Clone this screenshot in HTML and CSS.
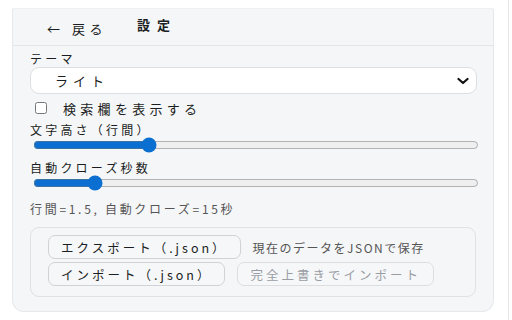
FILE: index.html
```html
<!DOCTYPE html>
<html lang="ja">
<head>
    <meta charset="UTF-8">
    <title>設定</title>
    <link rel="stylesheet" href="styles.css">
</head>
<body>
    <div class="page">
        <div class="panel">
            <div class="header">
                <button class="back">← 戻る</button>
                <h1>設定</h1>
            </div>

            <div class="content">
                <label class="label">テーマ</label>
                <div class="select-wrap">
                    <select class="select">
                        <option>ライト</option>
                        <option>ダーク</option>
                    </select>
                    <svg class="chevron" width="12" height="8" viewBox="0 0 12 8">
                        <path d="M1.5 2 L6 6 L10.5 2" fill="none" stroke="#111" stroke-width="2.2" stroke-linecap="round" stroke-linejoin="round"/>
                    </svg>
                </div>

                <label class="check">
                    <input type="checkbox">
                    <span>検索欄を表示する</span>
                </label>

                <label class="label">文字高さ（行間）</label>
                <input type="range" class="range" min="1" max="3" step="0.1" value="1.5">

                <label class="label">自動クローズ秒数</label>
                <input type="range" class="range" min="0" max="120" value="15">

                <p class="info">行間=1.5, 自動クローズ=15秒</p>

                <div class="io-box">
                    <div class="io-row">
                        <button class="btn">エクスポート（.json）</button>
                        <span class="hint">現在のデータをJSONで保存</span>
                    </div>
                    <div class="io-row">
                        <button class="btn">インポート（.json）</button>
                        <button class="btn" disabled>完全上書きでインポート</button>
                    </div>
                </div>
            </div>
        </div>
    </div>
</body>
</html>
```

FILE: styles.css
```css
body {
    margin: 0;
    font-family: "Noto Sans CJK JP", "Noto Sans", sans-serif;
    color: #1a1d21;
    background: #fff;
}

.page {
    width: 509px;
    height: 320px;
    border-right: 1px solid #e4e6ea;
    padding: 8px 0 0 12px;
    box-sizing: border-box;
}

.panel {
    width: 482px;
    height: 304px;
    box-sizing: border-box;
    background: #f5f6f8;
    border: 1px solid #e6e8ec;
    border-top-color: #eef0f2;
    border-radius: 2px 2px 12px 12px;
}

.header {
    display: flex;
    align-items: flex-start;
    gap: 18px;
    height: 36px;
    padding-left: 22px;
    border-bottom: 1px solid #e3e5e9;
}

.back {
    margin-top: 10px;
    padding: 0 12px;
    border: none;
    background: none;
    font-family: inherit;
    font-size: 13px;
    letter-spacing: 4.5px;
    color: #1a1d21;
}

h1 {
    margin: 6px 0 0;
    font-size: 13px;
    font-weight: bold;
    letter-spacing: 7px;
}

.content {
    padding: 6px 17px 0 17px;
    display: flex;
    flex-direction: column;
}

.label {
    font-size: 12px;
    letter-spacing: 3.2px;
    line-height: 14px;
    color: #1a1d21;
}

.select-wrap {
    position: relative;
    margin-top: 1px;
}

.select {
    appearance: none;
    width: 447px;
    height: 27px;
    padding: 0 0 0 24px;
    border: 1px solid #dcdfe4;
    border-radius: 9px;
    background: #fff;
    font-family: inherit;
    font-size: 13px;
    letter-spacing: 5px;
    color: #1a1d21;
}

.chevron {
    position: absolute;
    right: 7px;
    top: 10px;
}

.check {
    display: flex;
    align-items: center;
    gap: 16px;
    height: 16px;
    margin: 6px 0 7px 5px;
    font-size: 13px;
    letter-spacing: 4.3px;
    color: #1a1d21;
}

.check input {
    margin: 0;
    width: 12px;
    height: 12px;
}

.range {
    width: 446px;
    height: 12px;
    margin: 2px 0 10px 3px;
    accent-color: #0b6fd1;
}

.info {
    margin: 3px 0 11px;
    line-height: 14px;
    font-size: 12px;
    letter-spacing: 2.7px;
    color: #555;
}

.io-box {
    width: 446px;
    height: 70px;
    box-sizing: border-box;
    border: 1px solid #dfe1e5;
    border-radius: 9px;
    padding: 7px 17px 0;
    display: flex;
    flex-direction: column;
    gap: 3px;
}

.io-row {
    display: flex;
    align-items: center;
    gap: 12px;
}

.btn {
    height: 24px;
    padding: 0 12px;
    border: 1px solid #cfd2d7;
    border-radius: 7px;
    background: #f6f7f9;
    font-family: inherit;
    font-size: 12.5px;
    letter-spacing: 3px;
    color: #1a1d21;
}

.btn:disabled {
    color: #9a9ea4;
    border-color: #dcdee2;
}

.hint {
    font-size: 12px;
    letter-spacing: 1.5px;
    color: #555;
}
```
